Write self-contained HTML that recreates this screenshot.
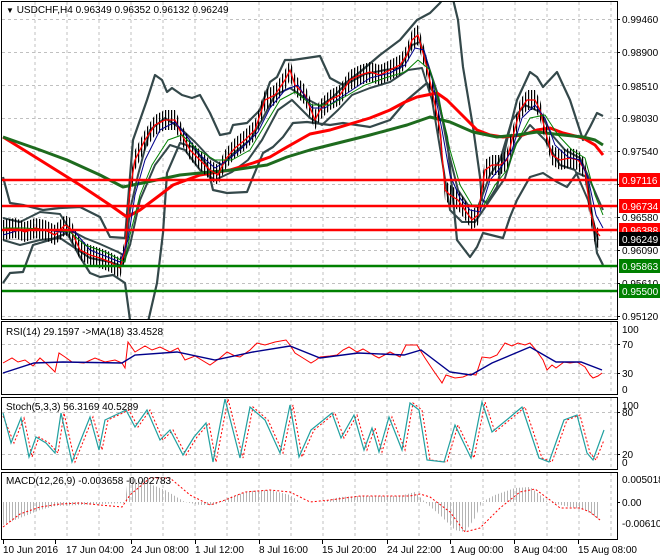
<!DOCTYPE html>
<html><head><meta charset="utf-8"><style>
html,body{margin:0;padding:0;background:#fff;}
svg{display:block;font-family:"Liberation Sans",sans-serif;font-size:10px;}
</style></head><body>
<svg width="660" height="560" viewBox="0 0 660 560" xmlns="http://www.w3.org/2000/svg">
<defs>
<pattern id="hist" width="3" height="10" patternUnits="userSpaceOnUse"><rect x="0" y="0" width="1" height="10" fill="#b4b4b4"/></pattern>
<pattern id="bars" width="3" height="10" patternUnits="userSpaceOnUse"><rect x="0" y="0" width="1.2" height="10" fill="#000"/></pattern>
<clipPath id="cm"><rect x="2" y="2" width="615" height="317"/></clipPath>
</defs>
<rect width="660" height="560" fill="#fff"/>
<g stroke="#c0c0c0" stroke-width="1" stroke-dasharray="3,3" fill="none">
<path d="M35 2V319M67 2V319M99 2V319M131 2V319M163 2V319M195 2V319M227 2V319M259 2V319M291 2V319M323 2V319M355 2V319M387 2V319M419 2V319M451 2V319M483 2V319M515 2V319M547 2V319M579 2V319M611 2V319"/>
<path d="M2 19.5H617M2 52.5H617M2 85.5H617M2 118.5H617M2 151.5H617M2 184.5H617M2 217.5H617M2 250.5H617M2 283.5H617M2 316.5H617"/>
<path d="M35 322V394M67 322V394M99 322V394M131 322V394M163 322V394M195 322V394M227 322V394M259 322V394M291 322V394M323 322V394M355 322V394M387 322V394M419 322V394M451 322V394M483 322V394M515 322V394M547 322V394M579 322V394M611 322V394"/>
<path d="M2 344.5H617M2 373.5H617"/>
<path d="M35 398V469M67 398V469M99 398V469M131 398V469M163 398V469M195 398V469M227 398V469M259 398V469M291 398V469M323 398V469M355 398V469M387 398V469M419 398V469M451 398V469M483 398V469M515 398V469M547 398V469M579 398V469M611 398V469"/>
<path d="M2 412.5H617M2 454.5H617"/>
<path d="M35 473V539M67 473V539M99 473V539M131 473V539M163 473V539M195 473V539M227 473V539M259 473V539M291 473V539M323 473V539M355 473V539M387 473V539M419 473V539M451 473V539M483 473V539M515 473V539M547 473V539M579 473V539M611 473V539"/>
</g>
<g clip-path="url(#cm)" fill="none" stroke-linejoin="round">
<line x1="2" y1="239.5" x2="617" y2="239.5" stroke="#c0c0c0"/>
<polyline stroke="#34484a" stroke-width="2.2" points="3,177 10,203 23,205 43,210 60,208 80,207 100,217 110,237 125,238 133,140 147,100 155,75 162,80 167,92 172,88 182,95 192,98 200,95 210,113 220,135 230,133 233,125 247,123 260,110 270,82 277,77 285,60 293,60 320,56 330,78 343,85 360,72 380,55 400,40 417,20 430,13 440,3 446,-5"/>
<polyline stroke="#34484a" stroke-width="2.2" points="452,-5 458,20 463,67 473,127 480,177 482,200 487,203 497,187 507,140 517,100 530,72 537,77 543,87 557,72 570,100 583,140 590,127 597,113 603,116"/>
<polyline stroke="#34484a" stroke-width="2.2" points="3,283 10,273 23,272 33,245 50,240 67,233 80,257 90,273 100,277 113,275 125,283 130,320"/>
<polyline stroke="#34484a" stroke-width="2.2" points="148,322 157,283 163,233 167,173 180,143 193,147 207,165 213,190 227,193 247,192 253,177 263,153 273,147 283,137 293,123 307,122 330,125 343,123 370,127 390,120 407,100 427,83 437,97 447,137 457,240 470,257 477,247 483,233 503,238 510,217 517,200 530,177 543,173 557,182 567,187 577,173 587,177 597,253 603,265"/>
<polyline stroke="#34484a" stroke-width="2" points="3,218 20,222 40,212 60,214 70,230 85,238 100,244 118,252 125,256 130,210 138,175 150,130 165,118 180,128 195,142 210,158 222,165 235,152 250,140 262,120 275,95 290,88 305,98 320,106 332,98 345,85 365,74 385,70 400,68 412,45 420,42 428,65 438,95 448,150 458,190 468,205 478,207 490,175 500,160 512,120 525,105 540,112 552,135 565,150 580,158 592,185 603,210"/>
<polyline stroke="#34484a" stroke-width="2" points="3,240 20,245 40,240 60,238 75,248 90,258 110,262 122,266 130,245 140,200 155,165 170,145 185,150 200,170 215,180 232,172 248,160 262,140 278,110 292,100 310,118 322,125 338,110 352,95 370,88 390,82 408,70 422,68 432,100 442,160 450,210 462,222 475,222 490,200 505,178 515,145 530,125 545,140 560,165 575,170 588,200 598,240"/>
<polyline stroke="#ff0000" stroke-width="3" points="3,137 40,160 80,185 110,205 127,217 140,210 160,195 173,185 200,175 230,170 253,163 270,157 287,147 310,134 330,130 350,124 370,118 390,110 405,102 417,97 437,93 447,100 457,110 467,120 477,130 490,135 503,137 523,135 537,130 550,128 563,133 583,138 595,145 603,155"/>
<polyline stroke="#1e6b1e" stroke-width="3" points="3,137 40,150 67,160 100,175 123,187 147,182 180,175 210,172 233,170 267,165 287,157 310,150 330,145 370,135 407,125 430,117 450,122 473,132 497,137 517,135 537,132 563,135 583,137 595,140 603,145"/>
<polygon fill="url(#bars)" stroke="none" points="3,220 15,218 25,222 35,218 45,220 55,225 65,215 70,218 80,240 90,245 100,248 110,252 120,258 125,240 130,180 135,150 145,130 155,115 165,110 175,110 182,125 190,140 200,150 210,160 218,165 225,150 235,138 245,130 255,120 265,90 275,85 285,70 290,60 295,75 305,85 315,110 320,100 330,90 340,85 350,70 360,65 370,62 380,65 390,60 400,55 407,45 412,30 418,25 425,50 432,80 440,120 445,180 450,185 458,190 465,200 472,210 478,205 485,160 492,155 500,155 507,150 512,130 520,100 527,90 535,90 540,100 545,120 552,145 560,150 570,148 578,150 585,160 590,200 595,225 600,230 600,250 595,245 590,220 585,180 578,170 570,168 560,170 552,165 545,140 540,120 535,110 527,110 520,120 512,150 507,170 500,175 492,175 485,180 478,225 472,230 465,220 458,210 450,205 445,200 440,140 432,100 425,70 418,45 412,50 407,65 400,75 390,80 380,85 370,82 360,85 350,90 340,105 330,110 320,120 315,130 305,105 295,95 290,80 285,90 275,105 265,110 255,140 245,150 235,158 225,170 218,185 210,180 200,170 190,160 182,145 175,130 165,130 155,135 145,150 135,170 130,200 125,260 120,278 110,272 100,268 90,265 80,260 70,238 65,235 55,245 45,240 35,238 25,242 15,238 3,240"/>
<polyline stroke="#ff0000" stroke-width="1.3" points="3,230 15,228 25,232 35,228 45,230 55,235 65,225 70,228 80,250 90,255 100,258 110,262 120,268 125,250 130,190 135,160 145,140 155,125 165,120 175,120 182,135 190,150 200,160 210,170 218,175 225,160 235,148 245,140 255,130 265,100 275,95 285,80 290,70 295,85 305,95 315,120 320,110 330,100 340,95 350,80 360,75 370,72 380,75 390,70 400,65 407,55 412,40 418,35 425,60 432,90 440,130 445,190 450,195 458,200 465,210 472,220 478,215 485,170 492,165 500,165 507,160 512,140 520,110 527,100 535,100 540,110 545,130 552,155 560,160 570,158 578,160 585,170 590,210 595,230 600,236"/>
<polyline stroke="#00008b" stroke-width="1" points="3,235 20,230 40,229 60,232 75,232 90,250 105,256 120,262 128,240 135,195 145,160 160,130 175,122 188,138 200,155 215,168 228,160 242,148 258,132 270,108 285,90 298,85 312,108 325,108 340,98 355,88 370,78 390,73 405,65 415,48 424,50 432,78 442,130 450,175 460,198 470,210 480,212 490,180 502,166 512,150 522,118 535,105 545,118 555,145 568,157 580,160 588,178 596,215 603,228"/>
<polyline stroke="#008000" stroke-width="1" points="3,228 25,228 50,230 70,232 85,245 105,252 125,262 130,235 140,195 152,165 168,140 182,135 198,150 215,160 232,160 250,150 265,125 280,100 295,92 312,105 330,105 348,95 365,85 385,78 405,72 418,60 430,70 440,105 450,150 460,185 472,205 484,205 495,185 507,170 518,140 530,118 545,115 558,135 572,150 585,158 595,195 603,215"/>
<g stroke-width="2.5">
<line x1="2" y1="180" x2="617" y2="180" stroke="#ff0000"/>
<line x1="2" y1="206" x2="617" y2="206" stroke="#ff0000"/>
<line x1="2" y1="230" x2="617" y2="230" stroke="#ff0000"/>
<line x1="2" y1="266" x2="617" y2="266" stroke="#008000"/>
<line x1="2" y1="291" x2="617" y2="291" stroke="#008000"/>
</g>
</g>
<polyline fill="none" stroke="#ff0000" stroke-width="1" points="3,363 12,358 18,362 25,360 33,366 40,358 48,365 55,372 59,353 65,357 72,362 84,363 95,358 105,362 115,360 122,363 125,368 128,342 135,352 145,346 152,350 160,347 170,352 178,348 185,360 195,356 210,365 220,358 227,352 235,356 240,357 250,350 257,343 265,345 275,342 286,340 290,345 295,353 303,358 311,363 316,360 320,357 330,356 337,355 343,350 349,347 357,352 363,349 370,353 375,356 379,358 390,352 400,357 406,345 417,345 420,350 425,358 433,370 440,380 442,383 446,375 455,378 463,377 470,374 476,375 482,357 490,358 497,355 505,343 512,346 518,343 525,345 530,343 536,350 543,360 547,370 552,365 556,368 564,362 570,363 577,362 585,367 590,375 593,378 598,376 602,373"/>
<polyline fill="none" stroke="#00008b" stroke-width="1.4" points="3,373 34,363 63,362 122,363 135,355 177,352 215,360 253,352 290,346 320,358 358,353 404,355 421,350 450,372 471,375 492,363 530,347 556,362 581,362 602,370"/>
<polyline fill="none" stroke="#ff0000" stroke-width="1" stroke-dasharray="2,2" points="3,416 14,443 24,418 32,457 39,437 49,443 58,453 64,413 75,462 93,417 102,450 108,420 129,410 138,427 150,410 163,440 173,430 186,455 197,437 209,423 216,462 228,399 243,458 253,407 268,420 283,453 293,405 302,457 314,430 335,413 344,438 357,415 367,450 375,428 382,452 392,417 405,450 413,403 422,410 430,460 447,462 458,425 474,458 485,402 495,432 512,418 525,407 542,458 552,462 567,420 580,415 590,453 596,460 604,440"/>
<polyline fill="none" stroke="#20a0a0" stroke-width="1.2" points="3,413 11,443 21,418 29,457 36,437 46,443 55,453 61,413 72,462 90,417 99,450 105,420 126,410 135,427 147,410 160,440 170,430 183,455 194,437 206,423 213,462 225,399 240,458 250,407 265,420 280,453 290,405 299,457 311,430 332,413 341,438 354,415 364,450 372,428 379,452 389,417 402,450 410,403 419,410 427,460 444,462 455,425 471,458 482,402 492,432 509,418 522,407 539,458 549,462 564,420 577,415 587,453 593,460 604,430"/>
<polygon fill="url(#hist)" points="3,525 20,518 40,510 55,506 80,505 100,504 125,503 128,477 145,482 165,490 185,502 200,505 215,505 230,497 250,491 270,490 290,495 300,502 320,502 340,497 360,496 400,496 415,492 425,502 440,515 455,530 465,532 475,518 482,502 495,495 515,488 530,487 540,495 548,502 565,506 585,510 600,520 600,502 3,502"/>
<polyline fill="none" stroke="#ff0000" stroke-width="1" stroke-dasharray="2,2" points="3,527 20,514 40,507 60,504 80,503 100,505 122,507 130,495 150,478 170,478 190,495 210,505 225,500 245,492 270,490 290,492 310,502 330,500 360,496 410,496 420,494 430,497 450,512 465,532 480,528 500,508 520,492 535,489 550,500 560,508 580,508 590,512 600,520"/>
<g fill="none" stroke="#000" stroke-width="1">
<rect x="1.5" y="1.5" width="616" height="318"/>
<rect x="1.5" y="321.5" width="616" height="73"/>
<rect x="1.5" y="397.5" width="616" height="72"/>
<rect x="1.5" y="472.5" width="616" height="67"/>
</g>
<g stroke="#000"><path d="M617 19.5h3M617 52.5h3M617 85.5h3M617 118.5h3M617 151.5h3M617 184.5h3M617 217.5h3M617 250.5h3M617 283.5h3M617 316.5h3M617 344.5h3M617 373.5h3M617 412.5h3M617 454.5h3M617 502.5h3"/>
<path d="M3.5 540v4M55.5 540v4M131.5 540v4M195.5 540v4M259.5 540v4M322.5 540v4M387.5 540v4M450.5 540v4M514.5 540v4M578.5 540v4"/></g>
<g fill="#000">
<text x="622" y="23">0.99460</text>
<text x="622" y="56">0.98900</text>
<text x="622" y="90">0.98510</text>
<text x="622" y="122">0.98030</text>
<text x="622" y="155">0.97540</text>
<text x="622" y="221">0.96580</text>
<text x="622" y="254">0.96090</text>
<text x="622" y="287">0.95610</text>
<text x="622" y="320">0.95120</text>
</g>
<rect x="619" y="173" width="41" height="14" fill="#ff0000"/><text x="622" y="184" fill="#fff">0.97116</text>
<rect x="619" y="199" width="41" height="14" fill="#ff0000"/><text x="622" y="210" fill="#fff">0.96734</text>
<rect x="619" y="223" width="41" height="14" fill="#ff0000"/><text x="622" y="234" fill="#fff">0.96388</text>
<rect x="619" y="232" width="41" height="14" fill="#000"/><text x="622" y="243" fill="#fff">0.96249</text>
<rect x="619" y="259" width="41" height="14" fill="#008000"/><text x="622" y="270" fill="#fff">0.95863</text>
<rect x="619" y="284" width="41" height="14" fill="#008000"/><text x="622" y="295" fill="#fff">0.95500</text>
<g fill="#000">
<text x="622" y="333">100</text><text x="622" y="348">70</text><text x="622" y="377">30</text><text x="622" y="393">0</text>
<text x="622" y="409">100</text><text x="622" y="416">80</text><text x="622" y="458">20</text><text x="622" y="466">0</text>
<text x="622" y="483">0.005018</text><text x="622" y="506">0.00</text><text x="622" y="527">-0.006101</text>
<text x="6" y="13"><tspan font-size="8">▼</tspan> USDCHF,H4  0.96349 0.96352 0.96132 0.96249</text>
<text x="6" y="335">RSI(14) 29.1597  -&gt;MA(18) 33.4528</text>
<text x="6" y="410">Stoch(5,3,3) 56.3169 40.5289</text>
<text x="6" y="484">MACD(12,26,9) -0.003658 -0.002783</text>
<text x="3" y="553">10 Jun 2016</text>
<text x="66" y="553">17 Jun 04:00</text>
<text x="131" y="553">24 Jun 08:00</text>
<text x="195" y="553">1 Jul 12:00</text>
<text x="259" y="553">8 Jul 16:00</text>
<text x="322" y="553">15 Jul 20:00</text>
<text x="387" y="553">24 Jul 22:00</text>
<text x="450" y="553">1 Aug 00:00</text>
<text x="514" y="553">8 Aug 04:00</text>
<text x="578" y="553">15 Aug 08:00</text>
</g>
</svg>
</body></html>
